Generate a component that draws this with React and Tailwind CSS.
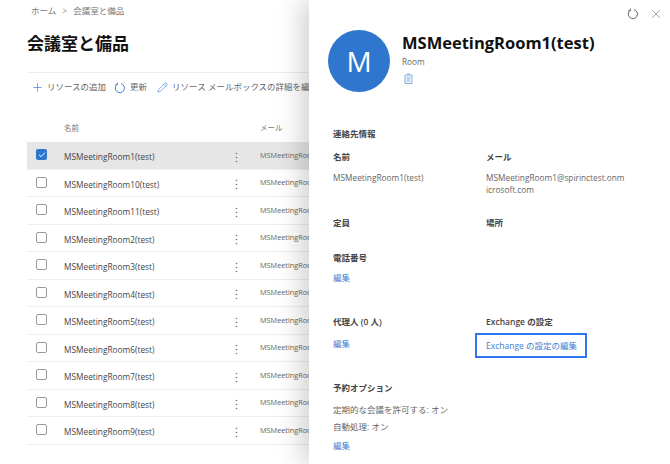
import React from 'react';
import { Plus, Pencil, X, Check } from 'lucide-react';

const rooms = ['1', '10', '11', '2', '3', '4', '5', '6', '7', '8', '9'];

const font = "font-['Open_Sans','Noto_Sans_CJK_JP',sans-serif]";

// circle open at the top, small arrow head on the left side of the gap
const Refresh = ({ color, className = '' }) => (
  <svg width="12" height="12" viewBox="0 0 12 12" fill="none" stroke={color} strokeWidth="1" className={`shrink-0 ${className}`}>
    <path d="M7 1.6A4.6 4.6 0 1 1 3.2 2.3" />
    <path d="M3.4 0.6v2h-2" />
  </svg>
);

const Dots = () => (
  <svg width="3" height="11" viewBox="0 0 3 11" fill="#777" className="block">
    <circle cx="1.5" cy="1.5" r="0.8" />
    <circle cx="1.5" cy="5.5" r="0.8" />
    <circle cx="1.5" cy="9.5" r="0.8" />
  </svg>
);

const Room = ({ id, selected }) => (
  <div className={`flex items-center h-[27.5px] border-b border-[#efefef] ${selected ? 'bg-[#e6e6e6]' : ''}`}>
    <div className="w-[37px] shrink-0 pl-[9px] -mt-[1px]">
      {selected ? (
        <div className="w-[11px] h-[11px] rounded-[2px] bg-[#2f76cf] flex items-center justify-center">
          <Check size={8} color="white" strokeWidth={3} />
        </div>
      ) : (
        <div className="w-[11px] h-[11px] rounded-[2px] border border-[#9a9a9a] bg-white" />
      )}
    </div>
    <div className="w-[171px] shrink-0 text-[8.3px] text-[#444] whitespace-nowrap mt-[4px]">MSMeetingRoom{id}(test)</div>
    <div className="w-[25px] shrink-0 mt-[4px]">
      <Dots />
    </div>
    <div className="text-[7.3px] text-[#666] whitespace-nowrap">MSMeetingRoom{id}@spirinctest.onmicrosoft.com</div>
  </div>
);

const Label = ({ children }) => <div className="text-[8.5px] font-semibold text-[#444] leading-[12px]">{children}</div>;
const Edit = ({ children = '編集' }) => <div className="text-[8.5px] text-[#3f80d2] leading-[12px] whitespace-nowrap">{children}</div>;

export default function App() {
  return (
    <div className={`${font} flex w-[670px] h-[464px] overflow-hidden bg-white`}>
      <div className="w-[309px] shrink-0 overflow-hidden pl-[27px]">
        <div className="flex items-center h-[20px] pl-[4px] pt-[2px] text-[8.5px] text-[#777]">
          <span>ホーム</span>
          <span className="mx-[6px] text-[#888]">&gt;</span>
          <span>会議室と備品</span>
        </div>
        <h1 className="text-[17px] font-semibold text-[#111] leading-[24px] mt-[12px]">会議室と備品</h1>
        <div className="h-[1px] bg-[#eeeeee] mt-[16px]" />
        <div className="flex items-center h-[29px] pl-[4px] text-[8.5px] text-[#666] whitespace-nowrap">
          <Plus size={13} color="#3f80d2" strokeWidth={1.3} className="shrink-0" />
          <span className="ml-[3px]">リソースの追加</span>
          <Refresh color="#3f80d2" className="ml-[8px]" />
          <span className="ml-[4px]">更新</span>
          <Pencil size={11} color="#3f80d2" strokeWidth={1.4} className="ml-[10px] shrink-0" />
          <span className="ml-[4px]">リソース メールボックスの詳細を編集</span>
        </div>
        <div className="flex items-center h-[27px] mt-[13px] text-[7.5px] text-[#777]">
          <div className="w-[37px] shrink-0" />
          <div className="w-[196px] shrink-0">名前</div>
          <div>メール</div>
        </div>
        <div>
          {rooms.map((id, i) => (
            <Room key={id} id={id} selected={i === 0} />
          ))}
        </div>
      </div>

      <div className="flex-1 bg-white relative shadow-[-8px_0_24px_rgba(0,0,0,0.18)] pl-[19px] pr-[7px]">
        <div className="flex justify-end items-center gap-[10px] h-[28px]">
          <Refresh color="#666" />
          <X size={14} color="#666" strokeWidth={1} />
        </div>
        <div className="flex">
          <div className="w-[62px] h-[62px] rounded-full bg-[#2f76cf] flex items-center justify-center text-white text-[28px] mt-[2px]">M</div>
          <div className="ml-[12px] mt-[3px]">
            <div className="text-[16.5px] font-bold text-[#111] leading-[24px]">MSMeetingRoom1(test)</div>
            <div className="text-[8.3px] text-[#666] leading-[12px] mt-[1px]">Room</div>
            <svg width="9" height="11" viewBox="0 0 9 11" className="ml-[2px] mt-[5px]" fill="none" stroke="#6f9fdc" strokeWidth="0.9">
              <path d="M3.2 1h2.6M1 2h7v8.4H1z" />
              <rect x="2.6" y="3.4" width="3.8" height="5.6" fill="#bcd3ee" stroke="none" />
            </svg>
          </div>
        </div>
        <div className="pl-[5px] mt-[36px]">
          <Label>連絡先情報</Label>
          <div className="grid grid-cols-[153px_1fr] mt-[11px]">
            <div>
              <Label>名前</Label>
              <div className="text-[8.3px] text-[#666] leading-[12px] mt-[9px]">MSMeetingRoom1(test)</div>
            </div>
            <div>
              <Label>メール</Label>
              <div className="text-[8.3px] text-[#666] leading-[12px] mt-[9px]">MSMeetingRoom1@spirinctest.onm<br />icrosoft.com</div>
            </div>
          </div>
          <div className="grid grid-cols-[153px_1fr] mt-[21px]">
            <Label>定員</Label>
            <Label>場所</Label>
          </div>
          <div className="mt-[23px]">
            <Label>電話番号</Label>
            <div className="mt-[8px]"><Edit /></div>
          </div>
          <div className="grid grid-cols-[153px_1fr] mt-[32px]">
            <div>
              <Label>代理人 (0 人)</Label>
              <div className="mt-[10px]"><Edit /></div>
            </div>
            <div>
              <Label>Exchange の設定</Label>
              <div className="-ml-[11px] mt-[5px] w-[112px] h-[25px] border-2 border-[#2f76ee] flex items-center pl-[9px]">
                <Edit>Exchange の設定の編集</Edit>
              </div>
            </div>
          </div>
          <div className="mt-[24px]">
            <Label>予約オプション</Label>
            <div className="text-[8.5px] text-[#666] leading-[12px] mt-[10px]">定期的な会議を許可する: オン</div>
            <div className="text-[8.5px] text-[#666] leading-[12px] mt-[5px]">自動処理: オン</div>
            <div className="mt-[7px]"><Edit /></div>
          </div>
        </div>
      </div>
    </div>
  );
}
